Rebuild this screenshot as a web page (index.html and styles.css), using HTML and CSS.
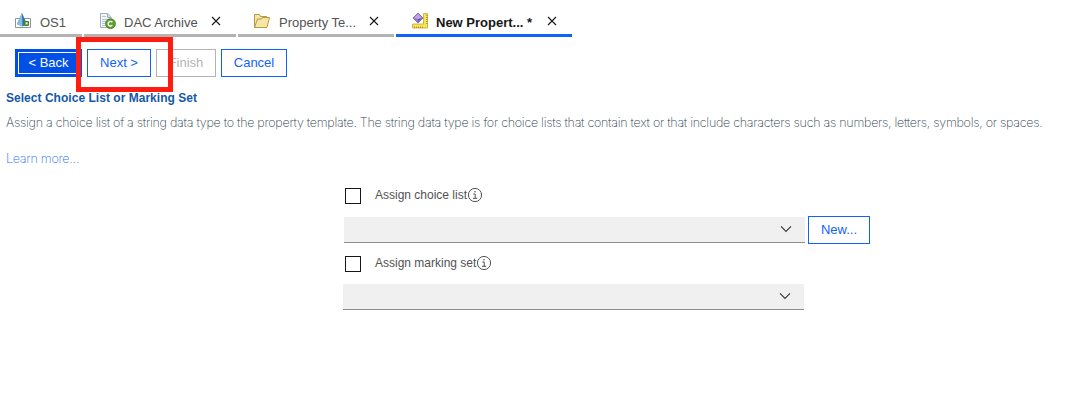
FILE: index.html
```html
<!DOCTYPE html>
<html lang="en">
<head>
<meta charset="utf-8">
<title>New Property Template</title>
<link rel="stylesheet" href="styles.css">
</head>
<body>
<nav class="tabs">
  <div class="tab tab-os">
    <svg class="icon" width="18" height="18" viewBox="0 0 18 18"><path d="M1.500 6.500h15v9h-15z" fill="#fff" stroke="#8b959c"/><path d="M8 1l5 11-4.500 2.500L3 12z" fill="#2f75a2"/><path d="M8 1l.500 13.500L3 12z" fill="#84bfdc"/><path d="M10.500 9.500h4v4h-4z" fill="#7ab648" stroke="#4a7d2c"/><path d="M12 10.500h1.500v1.500H12z" fill="#efffda"/></svg>
    <span class="label">OS1</span>
  </div>
  <div class="tab tab-archive">
    <svg class="icon" width="18" height="18" viewBox="0 0 18 18"><path d="M2.500 1.500h7.500l3 3.500v10.500H2.500z" fill="#f5f8fa" stroke="#9fadb8"/><path d="M9.500 1.500v4H13" fill="#d7e0e6" stroke="#9fadb8"/><path d="M4 4.500h4M4 7.500h7M4 9.500h5M4 11.500h4M4 13.500h4" stroke="#b5c4d0"/><circle cx="12.500" cy="11.700" r="4.900" fill="#60a32c" stroke="#39751a" stroke-width=".8"/><path d="M14.300 10.300a2.300 2.300 0 1 0 0 2.800" fill="none" stroke="#fff" stroke-width="1.400"/></svg>
    <span class="label">DAC Archive</span>
    <svg class="close" width="10" height="10" viewBox="0 0 10 10"><path d="M1 1l8 8M9 1L1 9"/></svg>
  </div>
  <div class="tab tab-property">
    <svg class="icon" width="18" height="18" viewBox="0 0 18 18"><path d="M2.500 15.500v-13h5l1 2h6v3" fill="#f3e4a7" stroke="#b99843"/><path d="M2.500 15.500l3-8.500h4l1-1.500h7l-2.500 10z" fill="#f3e7a6" stroke="#b99843"/></svg>
    <span class="label">Property Te...</span>
    <svg class="close" width="10" height="10" viewBox="0 0 10 10"><path d="M1 1l8 8M9 1L1 9"/></svg>
  </div>
  <div class="tab tab-new active">
    <svg class="icon" width="18" height="18" viewBox="0 0 18 18"><path d="M13.500 1.500h4v14.500h-15v-4h11z" fill="#f6e455" stroke="#c3a634" stroke-width=".8"/><path d="M16 3.500h1.500M16 5.500h1.500M16 7.500h1.500M16 9.500h1.500M16 11.500h1.500M4.500 14.500V16M6.500 14.500V16M8.500 14.500V16M10.500 14.500V16M12.500 14.500V16" stroke="#a58a2b" stroke-width=".8"/><path d="M8 1l5 5-5 5-5-5z" fill="#9276c8" stroke="#6d4d9b" stroke-width=".7"/><path d="M8 1.800L12 6 8 7 4 6z" fill="#bda6e2"/><path d="M8 7l4-1-4 4.200z" fill="#7656af"/></svg>
    <span class="label">New Propert... *</span>
    <svg class="close" width="10" height="10" viewBox="0 0 10 10"><path d="M1 1l8 8M9 1L1 9"/></svg>
  </div>
</nav>
<div class="actions">
  <button class="btn back"><span>&lt; Back</span></button>
  <button class="btn next"><span>Next &gt;</span></button>
  <button class="btn finish" disabled><span>Finish</span></button>
  <button class="btn cancel"><span>Cancel</span></button>
  <div class="highlight"></div>
</div>
<section class="intro">
  <h1><span>Select Choice List or Marking Set</span></h1>
  <p><span>Assign a choice list of a string data type to the property template. The string data type is for choice lists that contain text or that include characters such as numbers, letters, symbols, or spaces.</span></p>
  <a class="learn">Learn more…</a>
</section>
<form class="form">
  <label class="option"><span class="check"></span><span class="option-text">Assign choice list</span><svg class="info" width="16" height="16" viewBox="0 0 16 16"><circle cx="8" cy="8" r="6.600"/><path d="M6.300 7h1.900v4.200M6 11.300h4.300"/><circle class="dot" cx="8" cy="4.700" r=".8"/></svg></label>
  <div class="row">
    <div class="select"><svg class="chevron" width="12" height="8" viewBox="0 0 12 8"><path d="M1 1.300l5 5 5-5"/></svg></div>
    <button type="button" class="btn new"><span>New...</span></button>
  </div>
  <label class="option marking"><span class="check"></span><span class="option-text">Assign marking set</span><svg class="info" width="16" height="16" viewBox="0 0 16 16"><circle cx="8" cy="8" r="6.600"/><path d="M6.300 7h1.900v4.200M6 11.300h4.300"/><circle class="dot" cx="8" cy="4.700" r=".8"/></svg></label>
  <div class="row marking-row">
    <div class="select"><svg class="chevron" width="12" height="8" viewBox="0 0 12 8"><path d="M1 1.300l5 5 5-5"/></svg></div>
  </div>
</form>
</body>
</html>
```
FILE: styles.css
```css
* { box-sizing: border-box; }
body { margin: 0; height: 402px; overflow: hidden; background: #fff; color: #525252; font: 13px/18px "Liberation Sans", Arial, sans-serif; }
svg { display: block; flex: none; }
.tabs { display: flex; gap: 2px; height: 37px; }
.tab { display: flex; align-items: flex-start; padding: 12px 0 0 14px; border-bottom: 3px solid #b3b3b3; white-space: nowrap; }
.tab-os { width: 82px; }
.tab-archive { width: 152px; }
.tab-property { width: 156px; }
.tab-new { width: 176px; }
.label { margin-left: 8px; padding-top: 2px; }
.tab-archive .label { width: 79px; }
.tab-property .label { width: 82px; margin-left: 9px; }
.tab-new .label { width: 103px; }
.close { margin: 4px 0 0 8px; fill: none; stroke: #161616; stroke-width: 1.1; }
.active { border-color: #0f62fe; color: #161616; font-weight: bold; }
.actions { position: relative; display: flex; gap: 5px; padding: 12px 0 0 15px; height: 49px; }
.btn { flex: none; height: 28px; padding: 0; border: 1px solid #0f62fe; border-radius: 0; background: #fff; color: #0f62fe; font: inherit; text-align: center; white-space: nowrap; }
.back { width: 67px; border: 1px solid #0050e6; background: #0050e6; color: #fff; box-shadow: inset 0 0 0 2px #0050e6, inset 0 0 0 3px #fff; }
.next { width: 64px; }
.finish { width: 60px; border-color: #b3b3b3; color: #b3b3b3; }
.cancel { width: 66px; }
.highlight { position: absolute; left: 76px; top: 0; width: 97px; height: 55px; border: 5px solid #ff1d12; }
.intro { padding: 3px 6px 0; height: 97px; }
h1 { margin: 0; color: #1458aa; font-size: 12px; line-height: 18px; letter-spacing: .03px; }
p { margin: 7px 0 18px; color: #2f4452; font-family: Inter, sans-serif; font-size: 12.5px; font-weight: 200; letter-spacing: -.27px; white-space: nowrap; }
.learn { display: block; color: #1f70f5; font-family: Inter, sans-serif; font-size: 12.5px; font-weight: 200; letter-spacing: -.25px; }
.form { width: 536px; margin-left: 343px; padding-top: 3px; }
.option { display: flex; height: 30px; padding-left: 2px; font-size: 12px; }
.check { width: 16px; height: 16px; margin-top: 2px; border: 1px solid #161616; }
.option-text { margin-left: 14px; }
.info { margin-top: 1px; fill: none; stroke: #525252; }
.info .dot { fill: #525252; stroke: none; }
.row { display: flex; gap: 3px; padding-left: 1px; }
.select { display: flex; justify-content: flex-end; width: 461px; height: 26px; margin-top: 1px; padding: 8px 13px 0 0; border-bottom: 1px solid #8d8d8d; background: #f0f0f0; }
.chevron { fill: none; stroke: #393939; stroke-width: 1.2; }
.new { width: 62px; }
.marking { margin-top: 10px; height: 29px; }
.marking-row { padding-left: 0; }
```
